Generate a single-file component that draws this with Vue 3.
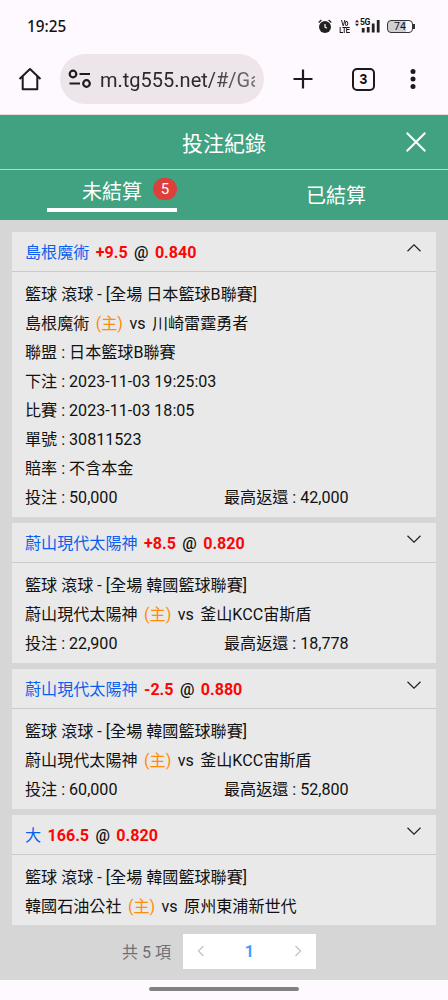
<script setup>
import { ref } from 'vue'

const tabs = ref([
  { name: '未結算', count: 5 },
  { name: '已結算', count: 0 },
])
const activeTab = ref(0)

// bet list
const bets = ref([
  {
    pick: '島根魔術', line: '+9.5', odds: '0.840', open: true,
    type: '籃球 滾球 - [全場 日本籃球B聯賽]',
    home: '島根魔術', away: '川崎雷霆勇者',
    details: [
      '聯盟 : 日本籃球B聯賽',
      '下注 : 2023-11-03 19:25:03',
      '比賽 : 2023-11-03 18:05',
      '單號 : 30811523',
      '賠率 : 不含本金',
    ],
    stake: '50,000', payout: '42,000',
  },
  {
    pick: '蔚山現代太陽神', line: '+8.5', odds: '0.820', open: false,
    type: '籃球 滾球 - [全場 韓國籃球聯賽]',
    home: '蔚山現代太陽神', away: '釜山KCC宙斯盾',
    details: [],
    stake: '22,900', payout: '18,778',
  },
  {
    pick: '蔚山現代太陽神', line: '-2.5', odds: '0.880', open: false,
    type: '籃球 滾球 - [全場 韓國籃球聯賽]',
    home: '蔚山現代太陽神', away: '釜山KCC宙斯盾',
    details: [],
    stake: '60,000', payout: '52,800',
  },
  {
    pick: '大', line: '166.5', odds: '0.820', open: false,
    type: '籃球 滾球 - [全場 韓國籃球聯賽]',
    home: '韓國石油公社', away: '原州東浦新世代',
    details: [],
    stake: '', payout: '',
  },
])

const toggle = (bet) => {
  bet.open = !bet.open
}
</script>

<template>
  <div class="phone">
    <!-- status bar -->
    <div class="status-bar">
      <span class="clock">19:25</span>
      <div class="status-icons">
        <svg class="alarm" width="14" height="14" viewBox="0 0 14 14">
          <circle cx="7" cy="8" r="6" fill="#222" />
          <path d="M.7 3.4 3.4 1M13.3 3.4 10.6 1" stroke="#222" stroke-width="1.3" />
          <path d="M7 5v3l1.8 1.3" fill="none" stroke="#fff" stroke-width="1.2" />
        </svg>
        <div class="volte"><span>Vo</span><span>LTE</span></div>
        <div class="signal">
          <svg width="25" height="14" viewBox="0 0 25 14">
            <path d="M0 3.2 2 .8l2 2.4zM0 4.8h4L2 7.2z" fill="#222" />
            <path d="M8.2 9V13.500M13.200 8V13.500M18.200 4.500V13.500M23.200 1V13.500" stroke="#222" stroke-width="2.800" />
          </svg>
          <span class="net">5G</span>
        </div>
        <div class="battery"><span>74</span></div>
      </div>
    </div>

    <!-- browser toolbar -->
    <div class="toolbar">
      <svg class="home" width="24" height="24" viewBox="0 0 24 24">
        <path d="M1.500 12 12 2l10.500 10M4.700 9.500v12.800h14.600V9.500" fill="none" stroke="#1d1a1e" stroke-width="2" stroke-linejoin="round" />
      </svg>
      <div class="url">
        <svg width="24" height="20" viewBox="0 0 24 20">
          <g fill="none" stroke="#1d1a1e" stroke-width="2.200">
            <circle cx="5" cy="5" r="3.300" />
            <circle cx="18.500" cy="14.500" r="3.300" />
            <path d="M11.500 5H22M1.500 14.500H12" />
          </g>
        </svg>
        <span class="address">m.tg555.net/#/Ga</span>
      </div>
      <svg class="plus" width="20" height="20" viewBox="0 0 20 20">
        <path d="M10 .5v19M.5 10h19" stroke="#1d1a1e" stroke-width="2.200" />
      </svg>
      <div class="tab-count">3</div>
      <svg class="dots" width="6" height="22" viewBox="0 0 6 22">
        <circle cx="3" cy="3.500" r="2.500" fill="#1d1a1e" />
        <circle cx="3" cy="11" r="2.500" fill="#1d1a1e" />
        <circle cx="3" cy="18.500" r="2.500" fill="#1d1a1e" />
      </svg>
    </div>

    <div class="title-bar">
      <span>投注紀錄</span>
      <svg class="close" width="20" height="20" viewBox="0 0 20 20">
        <path d="M.7.7 19.300 19.300M19.300.7.7 19.300" stroke="#fff" stroke-width="2" />
      </svg>
    </div>

    <div class="tabs">
      <div
        v-for="(tab, index) in tabs"
        :key="tab.name"
        class="tab"
        :class="{ active: activeTab === index }"
        @click="activeTab = index"
      >
        <div class="tab-label">
          {{ tab.name }}
          <span v-if="tab.count" class="badge">{{ tab.count }}</span>
        </div>
      </div>
    </div>

    <div class="content">
      <div class="list">
        <div v-for="(bet, index) in bets" :key="index" class="card">
          <div class="card-head" @click="toggle(bet)">
            <div class="pick">
              <span class="team">{{ bet.pick }}</span>
              <b class="red">{{ bet.line }}</b>
              <span class="at">@</span>
              <b class="red">{{ bet.odds }}</b>
            </div>
            <svg class="arrow" width="14" height="8" viewBox="0 0 14 8">
              <path :d="bet.open ? 'M.5 7.200 7 .8l6.500 6.400' : 'M.5.8 7 7.200 13.500.8'" fill="none" stroke="#222" stroke-width="1.200" />
            </svg>
          </div>
          <div class="card-body">
            <div class="row">{{ bet.type }}</div>
            <div class="row match">
              <span>{{ bet.home }}</span>
              <span class="host">(主)</span>
              <span>vs</span>
              <span>{{ bet.away }}</span>
            </div>
            <div v-for="text in bet.details" :key="text" class="row">{{ text }}</div>
            <div v-if="bet.stake" class="row money">
              <span>投注 : {{ bet.stake }}</span>
              <span>最高返還 : {{ bet.payout }}</span>
            </div>
          </div>
        </div>
      </div>

      <div class="pagination">
        <span class="total">共 5 項</span>
        <div class="pager">
          <svg width="8" height="12" viewBox="0 0 8 12">
            <path d="M6.500 1 1.500 6l5 5" fill="none" stroke="#c0c4cc" stroke-width="1.300" />
          </svg>
          <b>1</b>
          <svg width="8" height="12" viewBox="0 0 8 12">
            <path d="M1.500 1l5 5-5 5" fill="none" stroke="#c0c4cc" stroke-width="1.300" />
          </svg>
        </div>
      </div>
    </div>

    <div class="nav-bar"><div class="handle"></div></div>
  </div>
</template>

<style>
body {
  margin: 0;
}
</style>

<style scoped>
.phone {
  display: flex;
  flex-direction: column;
  width: 448px;
  height: 1000px;
  overflow: hidden;
  background-color: #fef9ff;
  color: #111;
  font-family: Roboto, "Noto Sans CJK TC", sans-serif;
  font-size: 16.1px;
}
.phone * {
  box-sizing: border-box;
}
.status-bar {
  display: flex;
  justify-content: space-between;
  align-items: center;
  height: 52px;
  padding: 0 35px 0 27px;
}
.clock {
  font-family: "Noto Sans", sans-serif;
  font-size: 15.3px;
  font-weight: 500;
}
.status-icons {
  display: flex;
  align-items: center;
  height: 16px;
}
.volte {
  display: flex;
  flex-direction: column;
  align-items: center;
  width: 11px;
  margin-left: 7px;
  font-family: "Liberation Sans", sans-serif;
  font-size: 6.5px;
  line-height: 5px;
  font-weight: bold;
  letter-spacing: -0.5px;
  transform: scaleY(1.4);
}
.signal {
  position: relative;
  height: 14px;
  margin-left: 5px;
}
.signal svg {
  display: block;
}
.net {
  position: absolute;
  left: 5px;
  top: -1px;
  font-size: 8.5px;
  line-height: 8px;
  font-weight: bold;
  letter-spacing: -0.5px;
  background-color: #fef9ff;
}
.battery {
  position: relative;
  display: flex;
  align-items: center;
  justify-content: center;
  width: 26px;
  height: 13px;
  margin-left: 7px;
  border: 1px solid #333;
  border-radius: 4px;
  background: linear-gradient(to right, #d2cfd3 74%, #fef9ff 74%);
  font-size: 10.5px;
}
.battery::after {
  content: '';
  position: absolute;
  right: -2.5px;
  top: 3px;
  width: 1.5px;
  height: 5px;
  background-color: #333;
}
.toolbar {
  display: flex;
  align-items: center;
  height: 63px;
  padding: 0 32px 8px 18px;
  border-bottom: 1px solid #e5d9df;
}
.url {
  display: flex;
  align-items: center;
  width: 204px;
  height: 50px;
  margin-left: 18px;
  padding: 0 9px 0 8px;
  border-radius: 25px;
  background-color: #eee5eb;
}
.address {
  flex: 1;
  margin-left: 8px;
  padding-top: 2px;
  overflow: hidden;
  white-space: nowrap;
  font-size: 20px;
  color: #2b272c;
  -webkit-mask-image: linear-gradient(to right, #000 65%, rgba(0, 0, 0, 0.6));
  mask-image: linear-gradient(to right, #000 65%, rgba(0, 0, 0, 0.6));
}
.plus {
  margin-left: 29px;
}
.tab-count {
  display: flex;
  align-items: center;
  justify-content: center;
  width: 23px;
  height: 23px;
  margin-left: 39px;
  border: 2px solid #1d1a1e;
  border-radius: 5px;
  font-family: "Liberation Sans", sans-serif;
  font-size: 14px;
  font-weight: bold;
}
.dots {
  margin-left: auto;
}
.title-bar {
  position: relative;
  display: flex;
  align-items: center;
  justify-content: center;
  height: 55px;
  border-bottom: 1px solid #b7d5c9;
  background-color: #40a280;
  color: #fff;
  font-size: 21px;
}
.close {
  position: absolute;
  right: 22px;
  top: 17px;
}
.tabs {
  display: flex;
  height: 50px;
  background-color: #40a280;
  color: #fff;
  font-size: 20px;
}
.tab {
  display: flex;
  flex: 1;
  justify-content: center;
}
.tab-label {
  position: relative;
  width: 130px;
  height: 42px;
  padding-top: 5px;
  line-height: 42px;
  text-align: center;
}
.active .tab-label {
  padding-top: 1px;
  border-bottom: 4px solid #fff;
}
.badge {
  position: absolute;
  right: 0;
  top: 8px;
  width: 24px;
  height: 22px;
  border-radius: 12px;
  background-color: #dd403b;
  font-size: 15px;
  line-height: 22px;
}
.content {
  display: flex;
  flex-direction: column;
  height: 760px;
  background-color: #d6d6d6;
}
.list {
  height: 705px;
  padding: 12px 12px 0;
  overflow: hidden;
}
.card {
  margin-bottom: 6px;
  background-color: #e9e9e9;
}
.card-head {
  display: flex;
  justify-content: space-between;
  height: 40px;
  padding: 0 15px 0 13px;
  border-bottom: 1px solid #cbcbcb;
}
.pick,
.match {
  display: flex;
  align-items: baseline;
  gap: 6.4px;
}
.pick {
  line-height: 41px;
}
.team {
  color: #0b5eef;
}
.red {
  color: #fd0505;
}
.at {
  font-weight: 500;
}
.arrow {
  margin-top: 12px;
}
.card-body {
  padding: 8px 13px 5px;
}
.row {
  height: 29px;
  line-height: 29px;
  white-space: nowrap;
}
.host {
  color: #ff8c0a;
}
.money {
  display: grid;
  grid-template-columns: 1fr 1fr;
}
.pagination {
  display: flex;
  align-items: center;
  justify-content: center;
  height: 52px;
  padding-right: 10px;
}
.total {
  margin-right: 12px;
  font-size: 16px;
  color: #6f7176;
}
.pager {
  display: flex;
  align-items: center;
  justify-content: space-between;
  width: 133px;
  height: 35px;
  padding: 0 14px;
  background-color: #fff;
}
.pager b {
  color: #409eff;
}
.nav-bar {
  display: flex;
  justify-content: center;
  height: 20px;
  padding-top: 7px;
}
.handle {
  width: 150px;
  height: 4px;
  border-radius: 2px;
  background-color: #828083;
}
</style>
